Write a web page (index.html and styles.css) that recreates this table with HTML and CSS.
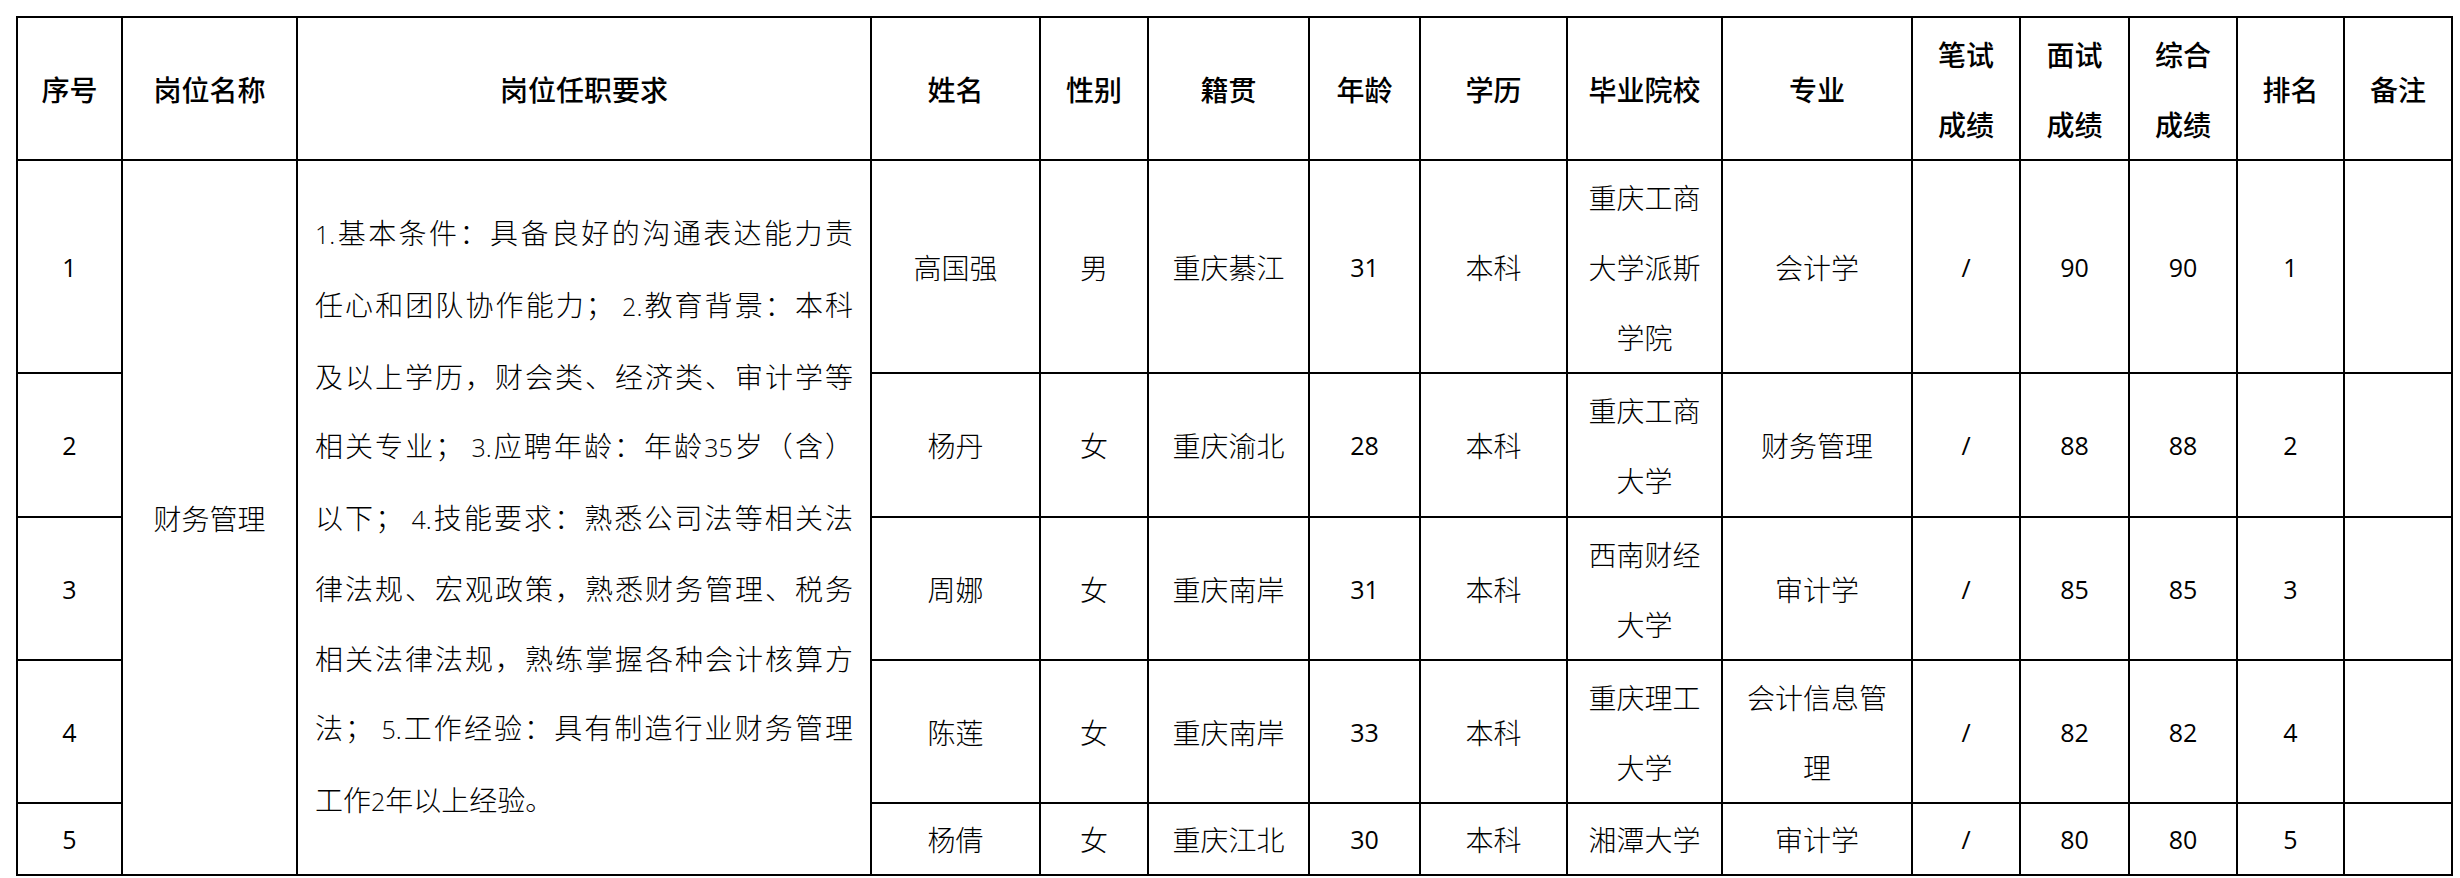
FILE: index.html
```html
<!DOCTYPE html>
<html lang="zh-CN">
<head>
<meta charset="utf-8">
<title>拟聘人员名单</title>
<link rel="stylesheet" href="styles.css">
</head>
<body>
<table class="grid">
  <colgroup>
    <col class="c-no">
    <col class="c-post">
    <col class="c-req">
    <col class="c-name">
    <col class="c-sex">
    <col class="c-home">
    <col class="c-age">
    <col class="c-edu">
    <col class="c-school">
    <col class="c-major">
    <col class="c-score">
    <col class="c-score2">
    <col class="c-score">
    <col class="c-rank">
    <col class="c-note">
  </colgroup>
  <thead>
    <tr class="r-head">
      <th>序号</th>
      <th>岗位名称</th>
      <th>岗位任职要求</th>
      <th>姓名</th>
      <th>性别</th>
      <th>籍贯</th>
      <th>年龄</th>
      <th>学历</th>
      <th>毕业院校</th>
      <th>专业</th>
      <th>笔试成绩</th>
      <th>面试成绩</th>
      <th>综合成绩</th>
      <th>排名</th>
      <th>备注</th>
    </tr>
  </thead>
  <tbody>
    <tr class="r-1">
      <td class="num">1</td>
      <td rowspan="5">财务管理</td>
      <td rowspan="5" class="req">
        <span class="ln"><span class="lat">1.</span>基本条件：具备良好的沟通表达能力责</span>
        <span class="ln">任心和团队协作能力； <span class="lat">2.</span>教育背景：本科</span>
        <span class="ln">及以上学历，财会类、经济类、审计学等</span>
        <span class="ln">相关专业； <span class="lat">3.</span>应聘年龄：年龄<span class="lat">35</span>岁（含）</span>
        <span class="ln">以下； <span class="lat">4.</span>技能要求：熟悉公司法等相关法</span>
        <span class="ln">律法规、宏观政策，熟悉财务管理、税务</span>
        <span class="ln">相关法律法规，熟练掌握各种会计核算方</span>
        <span class="ln">法； <span class="lat">5.</span>工作经验：具有制造行业财务管理</span>
        <span class="ln last">工作<span class="lat">2</span>年以上经验。</span>
      </td>
      <td>高国强</td>
      <td>男</td>
      <td>重庆綦江</td>
      <td class="num">31</td>
      <td>本科</td>
      <td>重庆工商大学派斯学院</td>
      <td>会计学</td>
      <td class="num">/</td>
      <td class="num">90</td>
      <td class="num">90</td>
      <td class="num">1</td>
      <td></td>
    </tr>
    <tr class="r-2">
      <td class="num">2</td>
      <td>杨丹</td>
      <td>女</td>
      <td>重庆渝北</td>
      <td class="num">28</td>
      <td>本科</td>
      <td>重庆工商大学</td>
      <td>财务管理</td>
      <td class="num">/</td>
      <td class="num">88</td>
      <td class="num">88</td>
      <td class="num">2</td>
      <td></td>
    </tr>
    <tr class="r-3">
      <td class="num">3</td>
      <td>周娜</td>
      <td>女</td>
      <td>重庆南岸</td>
      <td class="num">31</td>
      <td>本科</td>
      <td>西南财经大学</td>
      <td>审计学</td>
      <td class="num">/</td>
      <td class="num">85</td>
      <td class="num">85</td>
      <td class="num">3</td>
      <td></td>
    </tr>
    <tr class="r-4">
      <td class="num">4</td>
      <td>陈莲</td>
      <td>女</td>
      <td>重庆南岸</td>
      <td class="num">33</td>
      <td>本科</td>
      <td>重庆理工大学</td>
      <td>会计信息管理</td>
      <td class="num">/</td>
      <td class="num">82</td>
      <td class="num">82</td>
      <td class="num">4</td>
      <td></td>
    </tr>
    <tr class="r-5">
      <td class="num">5</td>
      <td>杨倩</td>
      <td>女</td>
      <td>重庆江北</td>
      <td class="num">30</td>
      <td>本科</td>
      <td>湘潭大学</td>
      <td>审计学</td>
      <td class="num">/</td>
      <td class="num">80</td>
      <td class="num">80</td>
      <td class="num">5</td>
      <td></td>
    </tr>
  </tbody>
</table>
</body>
</html>
```

FILE: styles.css
```css
html, body {
  margin: 0;
  padding: 0;
  background: #ffffff;
}

body {
  padding: 16px 0 0 16px;
  font-family: "Noto Sans CJK SC", "Noto Sans", sans-serif;
  color: #000000;
}

.grid {
  border-collapse: collapse;
  table-layout: fixed;
  width: 2437px;
}

.grid th,
.grid td {
  border: 2px solid #000000;
  padding: 0 17px;
  text-align: center;
  vertical-align: middle;
  font-size: 28px;
  line-height: 70px;
  font-weight: 400;
  word-break: break-all;
}

.grid th {
  font-weight: 500;
  color: #000000;
}

.grid td {
  font-weight: 300;
  color: #000000;
}

.c-no { width: 105px; }
.c-post { width: 175px; }
.c-req { width: 574px; }
.c-name { width: 169px; }
.c-sex { width: 108px; }
.c-home { width: 161px; }
.c-age { width: 111px; }
.c-edu { width: 147px; }
.c-school { width: 155px; }
.c-major { width: 190px; }
.c-score { width: 108px; }
.c-score2 { width: 109px; }
.c-rank { width: 107px; }
.c-note { width: 108px; }

.r-head { height: 143px; }
.r-1 { height: 213px; }
.r-2 { height: 144px; }
.r-3 { height: 143px; }
.r-4 { height: 143px; }
.r-5 { height: 72px; }

.grid td.num {
  font-family: "Open Sans", "Liberation Sans", sans-serif;
  font-size: 25px;
  font-weight: 400;
}

.lat {
  font-family: "Open Sans", "Liberation Sans", sans-serif;
  font-size: 25px;
}

.grid td.req {
  text-align: left;
  line-height: 69.6px;
}

.ln {
  display: block;
  text-align: justify;
  text-align-last: justify;
}

.ln.last {
  text-align-last: left;
}
```
